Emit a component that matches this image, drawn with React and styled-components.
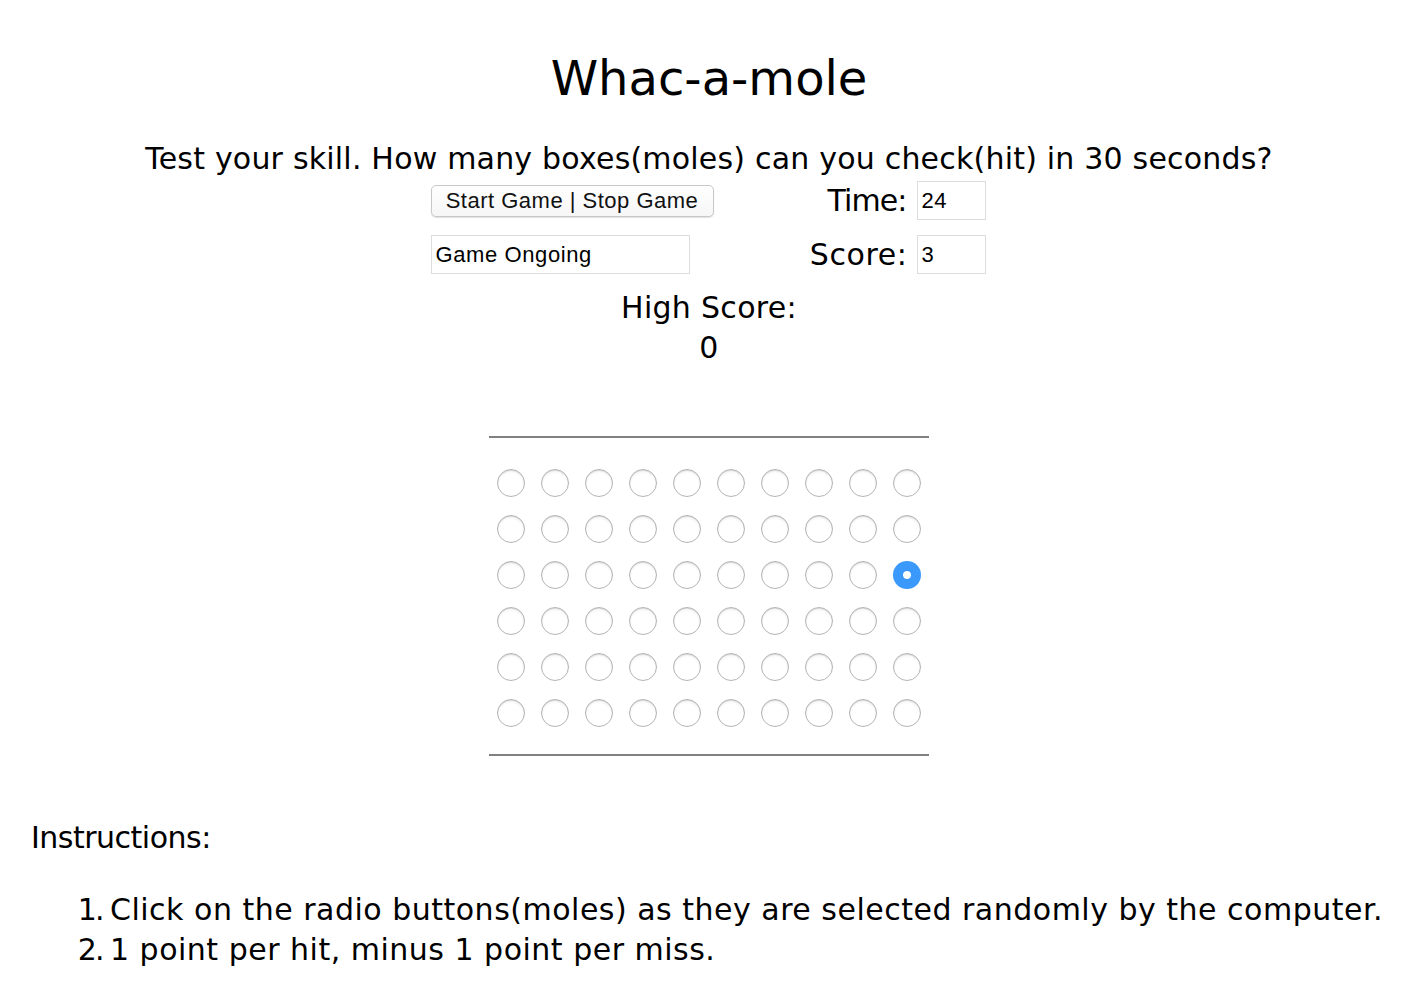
import React from "react";
import styled, { createGlobalStyle } from "styled-components";

const GlobalStyle = createGlobalStyle`
  body {
    margin: 0;
    background: #ffffff;
    color: #000000;
    font-family: "DejaVu Sans", sans-serif;
  }
`;

const Page = styled.div`
  width: 1418px;
  padding-top: 48px;
`;

const Title = styled.h1`
  margin: 0;
  text-align: center;
  font-weight: normal;
  font-size: 48px;
  line-height: 60px;
`;

const Tagline = styled.div`
  margin-top: 32px;
  text-align: center;
  font-size: 30px;
  line-height: 38px;
  letter-spacing: 0.2px;
`;

const Controls = styled.div`
  width: 557px;
  margin: 3px auto 0;
  display: grid;
  grid-template-columns: 283px 1fr 71px;
  row-gap: 15px;
  align-items: center;
`;

const Button = styled.button`
  height: 32px;
  padding: 0;
  background: linear-gradient(#ffffff, #f6f6f6);
  border: 1px solid #c8c8c8;
  border-radius: 5px;
  box-shadow: 0 1px 1px rgba(0, 0, 0, 0.12);
  font-family: "Liberation Sans", Arial, sans-serif;
  font-size: 22px;
  letter-spacing: 0.5px;
  color: #111;
`;

const Field = styled.div`
  box-sizing: border-box;
  height: 39px;
  width: ${(p) => p.width || "100%"};
  border: 1px solid #dcdcdc;
  padding: 0 4px;
  display: flex;
  align-items: center;
  font-family: "Liberation Sans", Arial, sans-serif;
  font-size: 22px;
  letter-spacing: 0.6px;
`;

const Label = styled.div`
  text-align: right;
  padding-right: ${(p) => p.pr || 10}px;
  font-size: 30px;
  letter-spacing: ${(p) => p.ls ?? -0.9}px;
`;

const HighScore = styled.div`
  margin-top: 14px;
  text-align: center;
  font-size: 30px;
  line-height: 40px;
  letter-spacing: 0.3px;
`;

const Board = styled.div`
  width: 440px;
  margin: 68px auto 0;
  border-top: 2px solid #808080;
  border-bottom: 2px solid #808080;
  padding: 31px 0 27px;
  display: grid;
  grid-template-columns: repeat(10, 28px);
  column-gap: 16px;
  row-gap: 18px;
  justify-content: center;
`;

const Mole = styled.span`
  box-sizing: border-box;
  width: 28px;
  height: 28px;
  border-radius: 50%;
  border: ${(p) => (p.checked ? "none" : "1px solid #b4b4b4")};
  background: ${(p) =>
    p.checked
      ? "radial-gradient(circle, #ffffff 0 3.5px, #3b99fc 4.5px)"
      : "radial-gradient(circle at 50% 60%, #ffffff 55%, #ececec 100%)"};
  box-shadow: ${(p) =>
    p.checked ? "none" : "inset 0 1px 1px rgba(0,0,0,0.12)"};
`;

const Instructions = styled.div`
  margin-top: 64px;
  padding-left: 31px;
  font-size: 30px;
  letter-spacing: -0.5px;
`;

const Steps = styled.ol`
  margin: 35px 0 0;
  padding-left: 79px;
  line-height: 40px;
  letter-spacing: 0.5px;

  li::marker {
    letter-spacing: -2px;
  }
`;

export default function App() {
  const rows = 6;
  const cols = 10;
  const active = 2 * cols + 9;

  return (
    <Page>
      <GlobalStyle />
      <Title>Whac-a-mole</Title>
      <Tagline>
        Test your skill. How many boxes(moles) can you check(hit) in 30 seconds?
      </Tagline>
      <Controls>
        <Button>Start Game | Stop Game</Button>
        <Label>Time:</Label>
        <Field width="69px">24</Field>
        <Field width="259px">Game Ongoing</Field>
        <Label pr={9} ls={0.6}>
          Score:
        </Label>
        <Field width="69px">3</Field>
      </Controls>
      <HighScore>
        High Score:
        <br />0
      </HighScore>
      <Board>
        {Array.from({ length: rows * cols }).map((_, i) => (
          <Mole key={i} checked={i === active} />
        ))}
      </Board>
      <Instructions>
        Instructions:
        <Steps>
          <li>
            Click on the radio buttons(moles) as they are selected randomly by
            the computer.
          </li>
          <li>1 point per hit, minus 1 point per miss.</li>
        </Steps>
      </Instructions>
    </Page>
  );
}
